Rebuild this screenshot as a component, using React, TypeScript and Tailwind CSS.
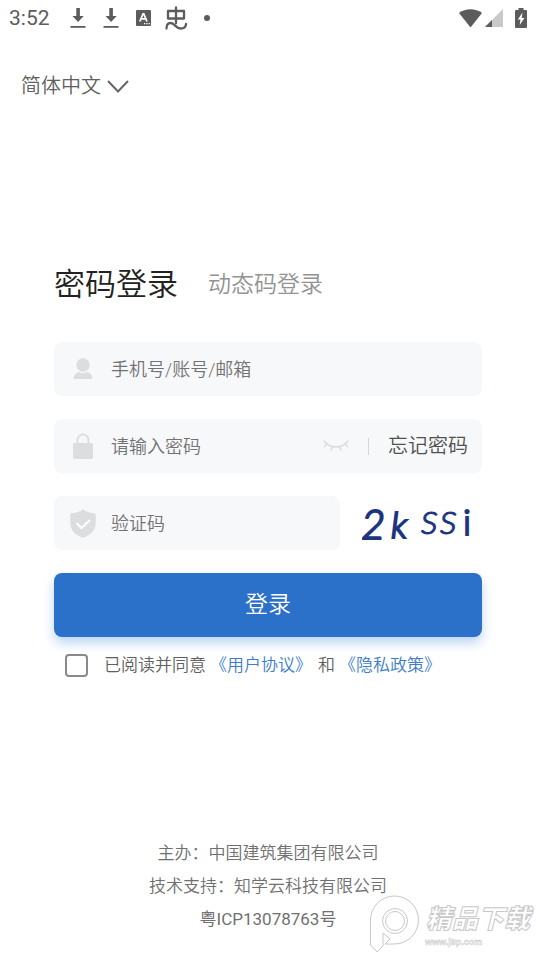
import type { ReactNode } from "react";

function DownloadIcon() {
  return (
    <svg width="16" height="20" viewBox="0 0 16 20" fill="#5c5c5c" aria-hidden="true">
      <path d="M6.3 0h3.6v8h3.8L8.1 14 2.5 8h3.8z" />
      <path d="M.5 18h15v1.8H.5z" />
    </svg>
  );
}

function StatusBar() {
  return (
    <header className="flex h-9 items-center justify-between px-[9px] font-normal text-[#5c5c5c]">
      <div className="flex items-center">
        <span className="w-[61px] text-[21px] leading-6">3:52</span>
        <DownloadIcon />
        <span className="w-[17px]" />
        <DownloadIcon />
        <svg className="ml-[17px]" width="15" height="16" viewBox="0 0 15 16" aria-hidden="true">
          <rect width="15" height="16" rx="1" fill="#5c5c5c" />
          <path d="M3.8 11.5 7 3.8h.8l3.2 7.7M5 8.8h4.8" fill="none" stroke="#fff" strokeWidth="1.7" />
          <path d="M8 13h1.3v1.3H8zM10.3 13h1.3v1.3h-1.3zM12.6 13h1.3v1.3h-1.3z" fill="#fff" />
        </svg>
        <svg
          className="ml-[14px]"
          width="23"
          height="24"
          viewBox="0 0 23 24"
          fill="none"
          stroke="#5c5c5c"
          strokeWidth="2.3"
          strokeLinecap="round"
          strokeLinejoin="round"
          aria-hidden="true"
        >
          <path d="M3 5h16v7.500H3zM11 1.3v16" />
          <path d="M1.500 22.500c0-3.500 1.500-5.500 4-5.500 4.500 0 5 5.500 10 5.500 3.500 0 5.500-1.500 5.500-4.500" />
        </svg>
        <span className="ml-4 size-1.5 rounded-full bg-[#5c5c5c]" />
      </div>
      <div className="flex items-center">
        <svg width="23" height="19" viewBox="0 0 23 19" fill="#5c5c5c" aria-hidden="true">
          <path d="M0 4C6.500-1 16.500-1 23 4L11.500 18.500z" />
        </svg>
        <svg className="ml-[3px]" width="18" height="18" viewBox="0 0 18 18" aria-hidden="true">
          <path d="M18 0v18H0z" fill="#c9c9c9" />
          <path d="M7 11v7H0z" fill="#5c5c5c" />
        </svg>
        <svg className="ml-3" width="12" height="20" viewBox="0 0 12 20" aria-hidden="true">
          <path d="M3.500 0h5v2H11q1 0 1 1v16q0 1-1 1H1q-1 0-1-1V3q0-1 1-1h2.500z" fill="#5c5c5c" />
          <path d="M7.500 4.500 2.800 11.500h2.700L4.700 17l4.700-7H6.700z" fill="#fff" />
        </svg>
      </div>
    </header>
  );
}

function UserIcon() {
  return (
    <svg width="20" height="22" viewBox="0 0 20 22" fill="#dcdddf" aria-hidden="true">
      <circle cx="10" cy="7" r="6.700" />
      <path d="M.5 21c.3-4 2.200-6.300 5.500-7 2.500 1.600 5.500 1.600 8 0 3.300.7 5.200 3 5.500 7z" />
    </svg>
  );
}

function LockIcon() {
  return (
    <svg width="20" height="26" viewBox="0 0 20 26" aria-hidden="true">
      <path d="M4.500 11V7a5.500 5.500 0 0 1 11 0v4" fill="none" stroke="#dcdddf" strokeWidth="2" />
      <rect y="10" width="20" height="16" rx="1.500" fill="#dcdddf" />
    </svg>
  );
}

function ShieldIcon() {
  return (
    <svg width="26" height="29" viewBox="0 0 26 29" aria-hidden="true">
      <path
        d="M13 .3c3.500 2.700 7.500 4 12.700 4.200v9.500c0 7-4.700 12-12.700 14.800C5 26 .3 21 .3 14V4.500C5.500 4.300 9.500 3 13 .3z"
        fill="#dcdddf"
      />
      <path d="m6.500 14 5 5 8.500-8" fill="none" stroke="#fff" strokeWidth="2" />
    </svg>
  );
}

function ClosedEyeIcon() {
  return (
    <svg
      width="26"
      height="14"
      viewBox="0 0 26 14"
      fill="none"
      stroke="#dcdddf"
      strokeWidth="1.500"
      strokeLinecap="round"
      aria-hidden="true"
    >
      <path d="M1 2c6 8 18 8 24 0M4.500 5 1.500 7.500M9.500 7.500 8.300 11M16.500 7.500l1.200 3.500M21.500 5l3 2.500" />
    </svg>
  );
}

interface FieldProps {
  id: string;
  label: string;
  type?: string;
  icon: ReactNode;
  children?: ReactNode;
}

function Field({ id, label, type = "text", icon, children }: FieldProps) {
  return (
    <div className="flex h-[54px] w-full min-w-0 items-center rounded-lg bg-[#f7f8fa] px-[14px]">
      <label htmlFor={id} className="flex w-[29px] shrink-0 justify-center" aria-label={label}>
        {icon}
      </label>
      <input
        id={id}
        type={type}
        placeholder={label}
        className="ml-3.5 h-full min-w-0 flex-1 bg-transparent text-[18px] text-[#333] outline-none placeholder:text-[#737373]"
      />
      {children}
    </div>
  );
}

function Captcha() {
  return (
    <button type="button" className="-my-2 w-[120px] shrink-0" aria-label="刷新验证码">
      <svg
        width="120"
        height="70"
        viewBox="0 -8 120 70"
        fill="#1d3580"
        stroke="#1d3580"
        className="font-['Lato',sans-serif]"
      >
        <text y="43" x="-1" fontSize="42" fontStyle="italic" strokeWidth="2">2</text>
        <text y="42" x="29" fontSize="36" fontStyle="italic" strokeWidth="2">k</text>
        <text y="38" x="59" fontSize="44" fontStyle="italic">s</text>
        <text y="38" x="78" fontSize="44" fontStyle="italic">s</text>
        <text y="39" x="101" fontSize="36" strokeWidth="2">i</text>
      </svg>
    </button>
  );
}

function Watermark() {
  return (
    <svg
      className="pointer-events-none absolute right-0 bottom-0"
      width="168"
      height="60"
      viewBox="0 0 168 60"
      fill="#fff"
      stroke="#c8c8c8"
      strokeWidth="1"
      aria-hidden="true"
    >
      <path d="M2.500 51V26a24 24 0 1 1 24 24H17l5-5-7-6v13L9 58z" />
      <circle cx="27" cy="27" r="12.500" />
      <circle cx="27" cy="27" r="9.500" />
      <text
        x="58"
        y="34"
        fontSize="26"
        fontWeight="900"
        fontStyle="italic"
        className="font-['Noto_Sans_CJK_SC',sans-serif]"
      >
        精品下载
      </text>
      <text x="57" y="51" fontSize="9" fontWeight="700" strokeWidth="0.500" className="font-['Liberation_Sans',sans-serif]">
        www.j9p.com
      </text>
    </svg>
  );
}

export default function App() {
  return (
    <div
      className="relative flex min-h-screen flex-col bg-white font-['Roboto','Noto_Sans_CJK_SC',sans-serif] font-[350]"
      lang="zh-CN"
    >
      <StatusBar />

      <button type="button" className="mt-[34px] ml-[21px] flex items-center gap-1.5 self-start text-[20px] leading-8 text-[#606060]">
        简体中文
        <svg width="22" height="13" viewBox="0 0 22 13" fill="none" stroke="#666" strokeWidth="2" aria-hidden="true">
          <path d="m1 1 10 10.500L21 1" />
        </svg>
      </button>

      <main className="mt-[159px] px-[54px]">
        <div className="flex items-center gap-[30px] leading-12">
          <button type="button" className="text-[31px] text-[#222]">密码登录</button>
          <button type="button" className="text-[23px] text-[#939393]">动态码登录</button>
        </div>

        <form className="mt-[33px] flex flex-col gap-[23px]" onSubmit={(e) => e.preventDefault()}>
          <Field id="account" label="手机号/账号/邮箱" icon={<UserIcon />} />

          <Field id="password" type="password" label="请输入密码" icon={<LockIcon />}>
            <button type="button" aria-label="显示密码">
              <ClosedEyeIcon />
            </button>
            <span className="mx-[19px] h-[17px] w-px bg-[#d5d5d5]" />
            <a href="#forgot" className="text-[20px] text-[#505050]">忘记密码</a>
          </Field>

          <div className="flex gap-[22px]">
            <Field id="captcha" label="验证码" icon={<ShieldIcon />} />
            <Captcha />
          </div>

          <button
            type="submit"
            className="h-16 rounded-lg bg-[#2b70c9] text-[23px] text-white shadow-[0_6px_12px_#bcd4f2]"
          >
            登录
          </button>
        </form>

        <div className="mt-3.5 ml-[11px] flex items-center text-[17px] leading-7 text-[#606060]">
          <input
            id="agree"
            type="checkbox"
            className="mr-4 size-[23px] shrink-0 appearance-none rounded-[4px] border-2 border-[#8a8a8a] checked:bg-[#2b70c9]"
          />
          <label htmlFor="agree">已阅读并同意</label>
          <a href="#terms" className="ml-1 text-[#3d7dcc]">《用户协议》</a>
          <span className="mr-1 ml-1.5">和</span>
          <a href="#privacy" className="text-[#3d7dcc]">《隐私政策》</a>
        </div>
      </main>

      <footer className="mt-auto pt-8 pb-[18px] text-center text-[17px] leading-[33px] text-[#707070]">
        <p>主办：中国建筑集团有限公司</p>
        <p>技术支持：知学云科技有限公司</p>
        <p className="font-normal">粤ICP13078763号</p>
      </footer>

      <Watermark />
    </div>
  );
}
